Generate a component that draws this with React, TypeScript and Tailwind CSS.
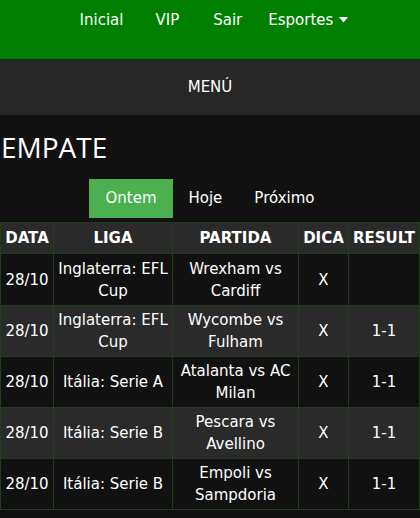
import React from "react";

const rows = [
  { d: "28/10", l: "Inglaterra: EFL Cup", p: "Wrexham vs Cardiff", x: "X", r: "", h: "h-[52px]" },
  { d: "28/10", l: "Inglaterra: EFL Cup", p: "Wycombe vs Fulham", x: "X", r: "1-1", h: "h-[51px]" },
  { d: "28/10", l: "Itália: Serie A", p: "Atalanta vs AC Milan", x: "X", r: "1-1", h: "h-[51px]" },
  { d: "28/10", l: "Itália: Serie B", p: "Pescara vs Avellino", x: "X", r: "1-1", h: "h-[51px]" },
  { d: "28/10", l: "Itália: Serie B", p: "Empoli vs Sampdoria", x: "X", r: "1-1", h: "h-[51px]" },
];

export default function App() {
  const td = "border border-[#1e3f1a] px-[2px] py-[3px] text-center align-middle leading-[22px]";
  const th = "border border-[#1e3f1a] px-[2px] h-[31px] text-center align-middle font-bold";
  return (
    <div className="w-[420px] h-[518px] bg-[#111111] text-white overflow-hidden" style={{ fontFamily: "'DejaVu Sans', Verdana, sans-serif" }}>
      <div className="h-[59px] bg-[#008000] flex justify-center pl-[8px] pt-[9px] text-[15px]">
        <div className="flex items-start gap-[32px] leading-[22px]">
          <span>Inicial</span>
          <span>VIP</span>
          <span className="ml-[2px] -mr-[6px]">Sair</span>
          <span className="flex items-center gap-[6px]">
            Esportes
            <svg width="9" height="6" viewBox="0 0 9 6"><path d="M0 0 L9 0 L4.5 5.5 Z" fill="white" /></svg>
          </span>
        </div>
      </div>
      <div className="h-[56px] bg-[#272727] flex items-center justify-center text-[15px]">MENÚ</div>
      <div className="pt-[12px] pl-[1px] text-[28px] leading-[40px]" style={{ fontFamily: "'Open Sans', sans-serif" }}>EMPATE</div>
      <div className="flex justify-center mt-[12px] text-[15px]">
        <div className="bg-[#4caf50] h-[39px] px-[16px] flex items-center">Ontem</div>
        <div className="h-[39px] px-[16px] flex items-center">Hoje</div>
        <div className="h-[39px] px-[16px] flex items-center">Próximo</div>
      </div>
      <table className="mt-[4px] w-[419px] table-fixed border-collapse text-[15px]">
        <colgroup>
          <col className="w-[53px]" />
          <col className="w-[119px]" />
          <col className="w-[126px]" />
          <col className="w-[50px]" />
          <col className="w-[71px]" />
        </colgroup>
        <thead>
          <tr className="bg-[#2a2a2a]">
            <th className={th + " whitespace-nowrap"}>DATA</th>
            <th className={th}>LIGA</th>
            <th className={th}>PARTIDA</th>
            <th className={th + " whitespace-nowrap"}>DICA</th>
            <th className={th + " whitespace-nowrap"}>RESULT</th>
          </tr>
        </thead>
        <tbody>
          {rows.map((r, i) => (
            <tr key={i} className={i % 2 === 1 ? "bg-[#2a2a2a]" : "bg-[#111111]"}>
              <td className={td + " whitespace-nowrap " + r.h}>{r.d}</td>
              <td className={td}>{r.l}</td>
              <td className={td}>{r.p}</td>
              <td className={td}>{r.x}</td>
              <td className={td}>{r.r}</td>
            </tr>
          ))}
        </tbody>
      </table>
    </div>
  );
}
